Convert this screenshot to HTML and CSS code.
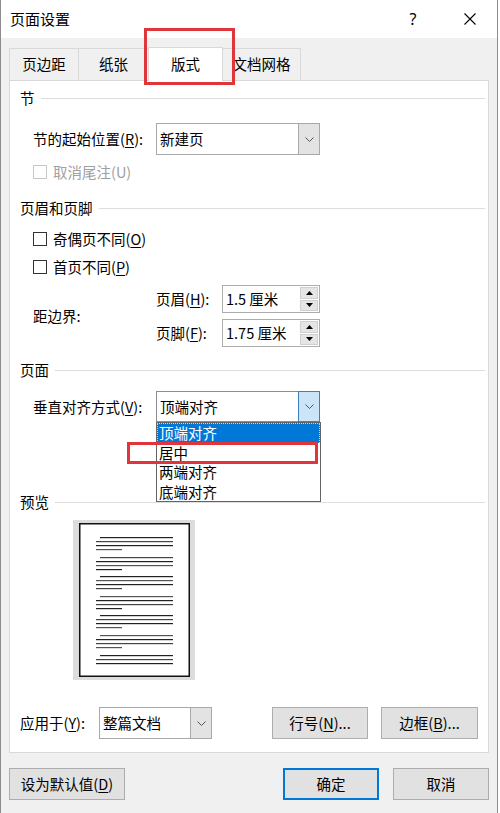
FILE: index.html
```html
<!DOCTYPE html>
<html lang="zh-CN">
<head>
<meta charset="utf-8">
<title>页面设置</title>
<link rel="stylesheet" href="styles.css">
</head>
<body>
<div class="window">
  <div class="titlebar">
    <span class="title">页面设置</span>
    <span class="help">?</span>
    <span class="close"><svg width="12" height="12" viewBox="0 0 12 12"><path d="M0.5 0.5 L11.5 11.5 M11.5 0.5 L0.5 11.5" stroke="#000" stroke-width="1.1" fill="none"/></svg></span>
  </div>

  <div class="tabs">
    <div class="tab t1">页边距</div>
    <div class="tab t2">纸张</div>
    <div class="tab t3 active">版式</div>
    <div class="tab t4">文档网格</div>
  </div>

  <div class="panel">
    <div class="group-title">节</div>
    <div class="row row-start">
      <span class="label">节的起始位置(<u>R</u>):</span>
      <div class="select sel-wide">
        <span class="value">新建页</span>
        <span class="arrow"><svg width="9" height="5" viewBox="0 0 9 5"><polyline points="0.5,0.5 4.5,4.5 8.5,0.5" fill="none" stroke="#555" stroke-width="1"/></svg></span>
      </div>
    </div>
    <div class="check disabled row-endnote"><span class="box"></span>取消尾注(U)</div>

    <div class="group-title gt-header">页眉和页脚</div>
    <div class="check row-odd"><span class="box"></span>奇偶页不同(<u>O</u>)</div>
    <div class="check row-first"><span class="box"></span>首页不同(<u>P</u>)</div>

    <div class="margins">
      <span class="label">距边界:</span>
      <div class="spins">
        <div class="spin-row">
          <span class="spin-label">页眉(<u>H</u>):</span>
          <div class="spin">
            <span class="value">1.5 厘米</span>
            <span class="spin-btns">
              <span class="sbtn"><svg width="7" height="4" viewBox="0 0 7 4"><polygon points="0,4 3.5,0 7,4" fill="#000"/></svg></span>
              <span class="sbtn"><svg width="7" height="4" viewBox="0 0 7 4"><polygon points="0,0 7,0 3.5,4" fill="#000"/></svg></span>
            </span>
          </div>
        </div>
        <div class="spin-row">
          <span class="spin-label">页脚(<u>F</u>):</span>
          <div class="spin">
            <span class="value">1.75 厘米</span>
            <span class="spin-btns">
              <span class="sbtn"><svg width="7" height="4" viewBox="0 0 7 4"><polygon points="0,4 3.5,0 7,4" fill="#000"/></svg></span>
              <span class="sbtn"><svg width="7" height="4" viewBox="0 0 7 4"><polygon points="0,0 7,0 3.5,4" fill="#000"/></svg></span>
            </span>
          </div>
        </div>
      </div>
    </div>

    <div class="group-title gt-page">页面</div>
    <div class="row row-valign">
      <span class="label">垂直对齐方式(<u>V</u>):</span>
      <div class="select sel-wide open">
        <span class="value">顶端对齐</span>
        <span class="arrow"><svg width="9" height="5" viewBox="0 0 9 5"><polyline points="0.5,0.5 4.5,4.5 8.5,0.5" fill="none" stroke="#555" stroke-width="1"/></svg></span>
      </div>
    </div>

    <div class="group-title gt-preview">预览</div>
    <div class="preview">
      <svg width="122" height="160" viewBox="0 0 122 160">
        <rect x="0" y="0" width="122" height="160" fill="#dcdcdc"/>
        <rect x="6.75" y="3.75" width="109.5" height="152.5" fill="#fff" stroke="#111" stroke-width="1.5"/>
        <g fill="#222">
          <rect x="27" y="17" width="73" height="1.2"/><rect x="23" y="21" width="77" height="1.2" fill="#444"/><rect x="23" y="25" width="77" height="1.2"/><rect x="23" y="29" width="26" height="1.2" fill="#555"/>
          <rect x="27" y="37" width="73" height="1.2" fill="#444"/><rect x="23" y="41" width="77" height="1.2"/><rect x="23" y="45" width="77" height="1.2" fill="#555"/><rect x="23" y="49" width="26" height="1.2"/>
          <rect x="27" y="56" width="73" height="1.2"/><rect x="23" y="60" width="77" height="1.2" fill="#555"/><rect x="23" y="64" width="77" height="1.2"/><rect x="23" y="68" width="26" height="1.2" fill="#444"/>
          <rect x="27" y="76" width="73" height="1.2" fill="#555"/><rect x="23" y="80" width="77" height="1.2"/><rect x="23" y="84" width="77" height="1.2" fill="#444"/><rect x="23" y="88" width="26" height="1.2"/>
          <rect x="27" y="95" width="73" height="1.2"/><rect x="23" y="99" width="77" height="1.2" fill="#444"/><rect x="23" y="103" width="77" height="1.2"/><rect x="23" y="107" width="26" height="1.2" fill="#555"/>
          <rect x="27" y="115" width="73" height="1.2" fill="#555"/><rect x="23" y="119" width="77" height="1.2"/><rect x="23" y="123" width="77" height="1.2" fill="#444"/><rect x="23" y="127" width="26" height="1.2" fill="#555"/>
          <rect x="27" y="135" width="73" height="1.2"/><rect x="23" y="139" width="77" height="1.2" fill="#444"/><rect x="23" y="143" width="77" height="1.2"/>
        </g>
      </svg>
    </div>

    <div class="row row-apply">
      <span class="label apply-label">应用于(<u>Y</u>):</span>
      <div class="select sel-apply">
        <span class="value">整篇文档</span>
        <span class="arrow"><svg width="9" height="5" viewBox="0 0 9 5"><polyline points="0.5,0.5 4.5,4.5 8.5,0.5" fill="none" stroke="#555" stroke-width="1"/></svg></span>
      </div>
      <button class="btn btn-lines">行号(<u>N</u>)...</button>
      <button class="btn btn-borders">边框(<u>B</u>)...</button>
    </div>
  </div>

  <div class="footer">
    <button class="btn btn-default">设为默认值(<u>D</u>)</button>
    <button class="btn btn-ok">确定</button>
    <button class="btn btn-cancel">取消</button>
  </div>

  <ul class="dropdown">
    <li class="item selected">顶端对齐</li>
    <li class="item">居中</li>
    <li class="item">两端对齐</li>
    <li class="item">底端对齐</li>
  </ul>

  <div class="mark mark-tab"></div>
  <div class="mark mark-item"></div>
</div>
</body>
</html>
```

FILE: styles.css
```css
* { box-sizing: border-box; }
html, body { margin: 0; padding: 0; }
body {
  width: 500px;
  height: 813px;
  background: #ffffff;
  font-family: "Noto Sans CJK SC", "Noto Sans", sans-serif;
  font-size: 14.5px;
  color: #000;
  overflow: hidden;
}
u { text-decoration: underline; text-underline-offset: 2px; }

.window {
  position: relative;
  width: 498px;
  height: 813px;
  background: #f0f0f0;
  border-left: 1px solid #8c8c8c;
  border-right: 1px solid #8c8c8c;
}

/* title bar */
.titlebar {
  height: 38px;
  background: #fff;
  display: flex;
  align-items: center;
}
.title {
  padding-left: 9px;
  font-size: 15px;
  line-height: 20px;
}
.help {
  margin-left: auto;
  margin-right: 11px;
  width: 46px;
  text-align: center;
  font-family: "Noto Sans", sans-serif;
  font-size: 16px;
  line-height: 20px;
}
.close {
  width: 46px;
  margin-right: 4px;
  display: flex;
  justify-content: center;
  align-items: center;
}

/* tabs */
.tabs {
  margin-top: 9px;
  height: 33px;
  padding-left: 8px;
  display: flex;
  align-items: flex-end;
}
.tab {
  height: 32px;
  border: 1px solid #d9d9d9;
  border-bottom: none;
  background: #f0f0f0;
  display: flex;
  align-items: center;
  justify-content: center;
  line-height: 20px;
  padding-bottom: 1px;
}
.t1 { width: 70px; }
.t2 { width: 71px; margin-left: -1px; }
.t3 { width: 75px; margin-left: -1px; }
.t4 { width: 79px; margin-left: -1px; }
.tab.active {
  height: 34px;
  margin-bottom: -1px;
  background: #fff;
  position: relative;
  z-index: 1;
}

/* panel */
.panel {
  margin-left: 8px;
  width: 480px;
  height: 673px;
  background: #fff;
  border: 1px solid #d9d9d9;
  padding: 7px 0 0 10px;
}
.group-title {
  height: 20px;
  line-height: 20px;
  display: flex;
  align-items: center;
}
.group-title::after {
  content: "";
  flex: 1;
  height: 1px;
  background: #dedede;
  margin: 0 3px 0 6px;
}
.gt-header { margin-top: 16px; }
.gt-page { margin-top: 13px; }
.gt-preview { margin-top: 70px; }

.row {
  display: flex;
  align-items: center;
  margin-left: 13px;
}
.label { width: 123px; line-height: 20px; flex: none; }
.row-start { margin-top: 15px; height: 32px; }
.row-valign { margin-top: 11px; height: 31px; }

.select {
  height: 100%;
  border: 1px solid #a8a8a8;
  background: #fff;
  display: flex;
}
.sel-wide { width: 164px; }
.select .value {
  flex: 1;
  padding-left: 3px;
  display: flex;
  align-items: center;
  line-height: 20px;
}
.select .arrow {
  width: 21px;
  background: #e3e3e3;
  border-left: 1px solid #a8a8a8;
  display: flex;
  align-items: center;
  justify-content: center;
}
.select.open { border-color: #8a8f96; }
.select.open .arrow {
  background: #cce4f7;
  border: 1px solid #3f7fc0;
  margin: -1px -1px -1px 0;
  width: 22px;
}

/* checkboxes */
.check {
  display: flex;
  align-items: center;
  height: 20px;
  line-height: 20px;
  margin-left: 13px;
}
.check .box {
  width: 14px;
  height: 14px;
  border: 1px solid #333;
  background: #fff;
  margin-right: 6px;
}
.check.disabled { color: #a0a0a0; }
.check.disabled .box { border-color: #c8c8c8; }
.row-endnote { margin-top: 7px; }
.row-odd { margin-top: 11px; }
.row-first { margin-top: 8px; }

/* margins spinners */
.margins {
  margin-top: 8px;
  margin-left: 13px;
  display: flex;
  align-items: center;
}
.spins {
  display: flex;
  flex-direction: column;
  gap: 6px;
}
.spin-row {
  display: flex;
  align-items: center;
  height: 28px;
}
.spin-label { width: 66px; line-height: 20px; }
.spin {
  width: 98px;
  height: 28px;
  border: 1px solid #adadad;
  background: #fff;
  display: flex;
}
.spin .value {
  flex: 1;
  padding-left: 3px;
  display: flex;
  align-items: center;
  line-height: 20px;
}
.spin-btns {
  width: 18px;
  margin: 1px 1px 1px 0;
  display: flex;
  flex-direction: column;
  gap: 1px;
}
.sbtn {
  flex: 1;
  background: #e5e5e5;
  border: 1px solid #cfcfcf;
  display: flex;
  align-items: center;
  justify-content: center;
}

/* preview */
.preview {
  margin-top: 8px;
  margin-left: 53px;
  height: 160px;
}
.preview svg { display: block; }

/* apply row */
.row-apply {
  margin-top: 27px;
  margin-left: 0;
  height: 32px;
}
.apply-label { width: 79px; }
.sel-apply { width: 113px; }

.btn {
  font: inherit;
  color: #000;
  background: #e1e1e1;
  border: 1px solid #adadad;
  height: 32px;
  padding: 0;
  line-height: 20px;
  display: flex;
  align-items: center;
  justify-content: center;
}
.btn-lines { width: 96px; margin-left: 60px; }
.btn-borders { width: 97px; margin-left: 13px; }

/* footer */
.footer {
  margin-top: 15px;
  padding: 0 8px;
  display: flex;
}
.btn-default { width: 116px; }
.btn-ok {
  width: 96px;
  margin-left: auto;
  border: 2px solid #0078d7;
}
.btn-cancel { width: 96px; margin-left: 14px; }

/* dropdown list (open menu overlay) */
.dropdown {
  position: absolute;
  left: 155px;
  top: 422px;
  width: 165px;
  height: 80px;
  margin: 0;
  padding: 0;
  list-style: none;
  background: #fff;
  border: 1px solid #646464;
  z-index: 5;
}
.item {
  height: 19.5px;
  line-height: 19.5px;
  padding-left: 2px;
}
.item.selected {
  background: #0078d7;
  color: #fff;
  outline: 1px dotted #b8d8f5;
  outline-offset: -1px;
}

/* red annotation boxes */
.mark {
  position: absolute;
  border: 3px solid #e0353a;
  z-index: 10;
}
.mark-tab { left: 143px; top: 28px; width: 91px; height: 57px; }
.mark-item { left: 126px; top: 442px; width: 191px; height: 22px; }
```
